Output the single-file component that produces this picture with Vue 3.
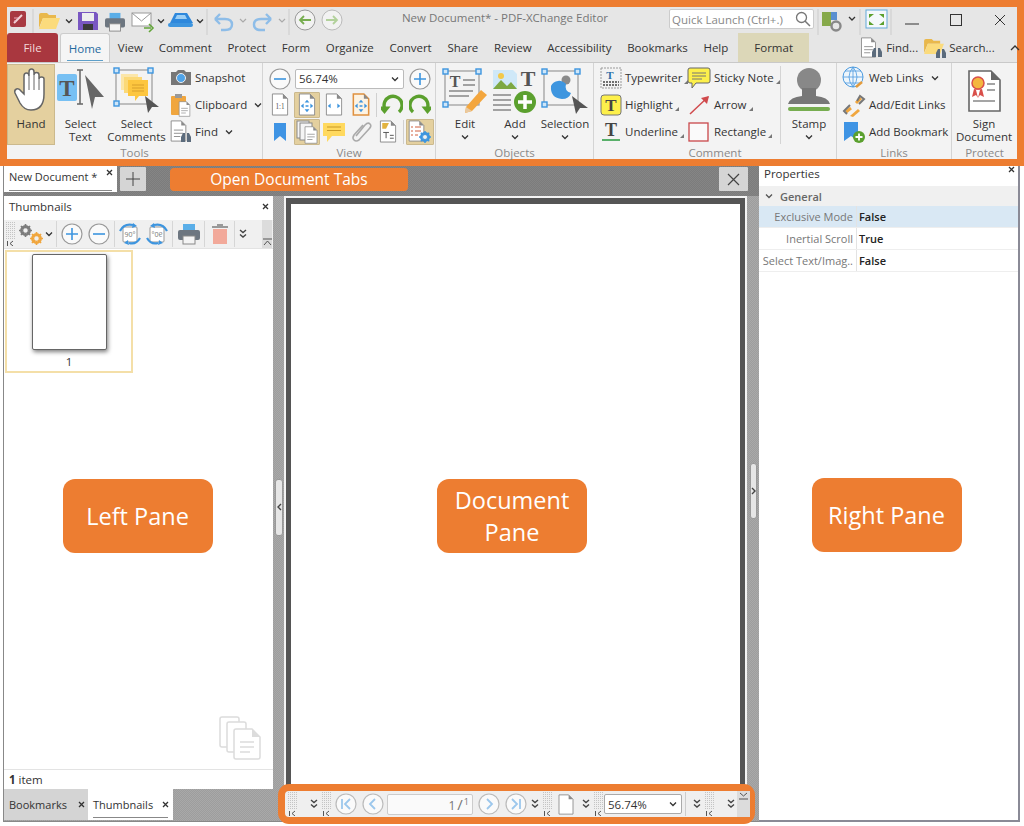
<script setup>
const tabs = ['View', 'Comment', 'Protect', 'Form', 'Organize', 'Convert', 'Share', 'Review', 'Accessibility', 'Bookmarks', 'Help']
const props = [
  { name: 'Exclusive Mode', value: 'False', on: true },
  { name: 'Inertial Scroll', value: 'True', on: false },
  { name: 'Select Text/Imag..', value: 'False', on: false }
]
</script>

<template>
  <div class="app">
    <svg class="defs" aria-hidden="true">
      <defs>
        <pattern id="dots" width="2" height="2" patternUnits="userSpaceOnUse"><rect width="1" height="1" fill="#c4c4c4" /></pattern>
        <symbol id="chev" viewBox="0 0 8 8"><path d="M1 2.500 4 5.500 7 2.500" fill="none" stroke="#333" stroke-width="1.300" /></symbol>
        <symbol id="dbl" viewBox="0 0 10 12"><path d="M2 2 5 4.500 8 2M2 6.500 5 9 8 6.500" fill="none" stroke="#444" stroke-width="1.400" /></symbol>
        <symbol id="grip" viewBox="0 0 10 24"><rect width="10" height="18" fill="url(#dots)" /><path d="M1.500 19v5M7 19 4 21.500 7 24" fill="none" stroke="#555" /></symbol>
        <symbol id="circ" viewBox="0 0 22 22"><circle cx="11" cy="11" r="10" fill="#fafafa" stroke="#bbb" stroke-width="1.200" /></symbol>
        <symbol id="plus" viewBox="0 0 22 22"><circle cx="11" cy="11" r="10" fill="#fafafa" stroke="#999" stroke-width="1.200" /><path d="M11 5v12M5 11h12" stroke="#3d95df" stroke-width="1.600" /></symbol>
        <symbol id="minus" viewBox="0 0 22 22"><circle cx="11" cy="11" r="10" fill="#fafafa" stroke="#999" stroke-width="1.200" /><path d="M5 11h12" stroke="#3d95df" stroke-width="1.600" /></symbol>
        <symbol id="print" viewBox="0 0 24 22"><rect x="6" y="1" width="12" height="7" fill="#5aaee8" /><rect x="1" y="7" width="22" height="10" rx="2" fill="#6d7680" /><rect x="6" y="13" width="12" height="8" fill="#f4f4f4" stroke="#888" /></symbol>
        <symbol id="folder" viewBox="0 0 23 18"><path d="M1 3q0-2 2-2h6l2 2h7v3H5L1 16z" fill="#e9b84c" /><path d="M1 17 5 6h17l-4 11z" fill="#fbdb7c" /></symbol>
        <symbol id="binoc" viewBox="0 0 12 11"><path d="M1 10V5l2-4h2v9zM7 10V1h2l2 4v5z" fill="#5b6b7c" /></symbol>
        <symbol id="doc" viewBox="0 0 18 24"><path d="M1 1h11l5 5v17H1z" fill="#fff" stroke="#8a8a8a" /><path d="M12 1v5h5z" fill="#8a8a8a" /></symbol>
        <symbol id="docl" viewBox="0 0 18 24"><path d="M1 1h11l5 5v17H1z" fill="#fff" stroke="#8a8a8a" /><path d="M12 1v5h5z" fill="#8a8a8a" /><path d="M4 11h10M4 14.500h10M4 18h7" stroke="#8a8a8a" /></symbol>
        <symbol id="arrows4" viewBox="0 0 18 24"><path d="M9 7 6.500 10h5zM9 20l-2.500-3h5zM2.500 13.500l3-2.500v5zM15.500 13.500l-3-2.500v5z" fill="#3d95df" /><path d="M7.500 13.500h3" stroke="#3d95df" stroke-width="1.500" /></symbol>
        <symbol id="rot" viewBox="0 0 22 22"><path d="M4 18A9 9 0 1 1 18.500 14" fill="none" stroke="#5ba02e" stroke-width="3.400" /><path d="M12.500 12.500h12L18.500 20z" fill="#5ba02e" /></symbol>
        <symbol id="ribbon" viewBox="0 0 14 20"><path d="M1 1h12v18l-6-5-6 5z" fill="#3f94e4" /></symbol>
        <symbol id="note" viewBox="0 0 24 22"><path d="M1 2h22v13H10l-5 6v-6H1z" fill="#ffd95e" /><path d="M5 6h14M5 9.500h14" stroke="#c99a27" /></symbol>
        <symbol id="rot90" viewBox="0 0 22 22"><rect x="4" y="4" width="14" height="15" rx="1" fill="#fff" stroke="#999" /><text x="11" y="14" font-size="7" text-anchor="middle" fill="#777" font-family="Open Sans">90°</text><path d="M1 8Q5 0 14 2M21 15q-4 7-11 5" fill="none" stroke="#3d95df" stroke-width="2.200" /><path d="M14 0l4 3-5 2zM9 17l-4 3 5 2z" fill="#3d95df" /></symbol>
        <symbol id="gear" viewBox="0 0 12 12"><circle cx="6" cy="6" r="3.800" fill="none" stroke="currentColor" stroke-width="2.400" /><path d="M6 0v12M0 6h12M1.800 1.800l8.400 8.400M10.200 1.800l-8.400 8.400" stroke="currentColor" stroke-width="1.500" /><circle cx="6" cy="6" r="2" fill="#f0f0f0" /></symbol>
      </defs>
    </svg>

    <header class="top">
      <div class="titlebar">
        <svg width="31" height="26" viewBox="0 0 31 26"><rect x="3" y="2" width="16" height="16" rx="2" fill="#a83a42" /><path d="M7 14 15 6" stroke="#f0d5d8" stroke-width="2" /><path d="M7 9h4M7 12h2" stroke="#eab" /><path d="M26 0v26" stroke="#ccc" /></svg>
        <svg width="23" height="26"><use href="#folder" x="0" y="3" width="23" height="18" /></svg>
        <svg width="16" height="26"><use href="#chev" x="4" y="8" width="8" height="8" /></svg>
        <svg width="27" height="26" viewBox="0 0 27 26"><path d="M1 3h18l2 2v16H1z" fill="#7957c2" /><rect x="5" y="4" width="12" height="8" fill="#eee" /><rect x="6" y="15" width="10" height="6" fill="#3a3a3a" /></svg>
        <svg width="27" height="26"><use href="#print" x="0" y="3" width="22" height="20" /></svg>
        <svg width="26" height="26" viewBox="0 0 26 26"><rect x="1" y="4" width="19" height="13" fill="#fff" stroke="#999" /><path d="M1 4 10.500 12 20 4" fill="none" stroke="#999" /><path d="M13 19h7M18 15l4 4-4 4" fill="none" stroke="#63a53a" stroke-width="1.600" /></svg>
        <svg width="8" height="26"><use href="#chev" x="0" y="8" width="8" height="8" /></svg>
        <svg width="31" height="26" viewBox="0 0 31 26"><path d="M5 14 10 4h12l6 10z" fill="#2e88dc" /><path d="M12 6h8l2 4H10z" fill="#9ccff5" /><rect x="3" y="14" width="25" height="4" rx="2" fill="#3d95df" /></svg>
        <svg width="8" height="26"><use href="#chev" x="0" y="8" width="8" height="8" /></svg>
        <svg width="75" height="26" viewBox="0 0 75 26"><path d="M3 0v26" stroke="#ccc" /><path d="M11 10h10q7 0 7 5.500T21 21h-4M11 10l5-5M11 10l5 5" fill="none" stroke="#8ebde8" stroke-width="2.400" /><path d="M36 10l3 3 3-3" fill="none" stroke="#aaa" stroke-width="1.200" /><path d="M67 10H57q-7 0-7 5.500T57 21h4M67 10l-5-5M67 10l-5 5" fill="none" stroke="#8ebde8" stroke-width="2.400" /></svg>
        <svg width="15" height="26"><path d="M0 10l3 3 3-3" fill="none" stroke="#aaa" stroke-width="1.200" /><path d="M10 0v26" stroke="#ccc" /></svg>
        <svg width="56" height="26" viewBox="0 0 56 26"><circle cx="11" cy="11" r="10" fill="#f2f2f2" stroke="#999" /><path d="M17 11H6M10 7l-4 4 4 4" fill="none" stroke="#77ad50" stroke-width="1.800" /><circle cx="38" cy="11" r="10" fill="#f2f2f2" stroke="#bbb" /><path d="M32 11h11M39 7l4 4-4 4" fill="none" stroke="#b2d19b" stroke-width="1.800" /></svg>
        <div class="title">New Document* - PDF-XChange Editor</div>
        <div class="quick"><span>Quick Launch (Ctrl+.)</span><svg width="16" height="16" viewBox="0 0 16 16"><circle cx="6.500" cy="6.500" r="5" fill="none" stroke="#777" stroke-width="1.300" /><path d="M10 10l5 5" stroke="#777" stroke-width="1.500" /></svg></div>
        <svg class="qr" width="46" height="26" viewBox="0 0 46 26"><path d="M2 0v26" stroke="#ccc" /><path d="M6 3h9v14H6z" fill="#86a94a" /><path d="M15 3h6v8h-6z" fill="#5a8fd0" /><circle cx="20" cy="17" r="4.500" fill="#e6e6e6" stroke="#888" stroke-width="2.400" /><path d="M33 8l3 3 3-3" fill="none" stroke="#333" stroke-width="1.300" /><path d="M44 0v26" stroke="#ccc" /></svg>
        <svg width="31" height="26" viewBox="0 0 31 26"><rect x="4" y="1" width="21" height="18" fill="#f4f8fb" stroke="#62a9d9" /><path d="M7 5h5l-5 4zM22 5h-5l5 4zM7 16h5l-5-4zM22 16h-5l5-4z" fill="#5ba02e" /><path d="M29 0v26" stroke="#ccc" /></svg>
        <div class="wins">
          <svg width="14" height="14"><path d="M0 11h14" stroke="#333" /></svg>
          <svg width="14" height="14"><rect x="1.500" y="1.500" width="11" height="11" fill="none" stroke="#333" /></svg>
          <svg width="14" height="14"><path d="M2 2l10 10M12 2 2 12" stroke="#333" /></svg>
        </div>
      </div>

      <nav class="tabrow">
        <div class="file">File</div>
        <div class="home"><span>Home</span></div>
        <div class="tab" v-for="t in tabs" :key="t">{{ t }}</div>
        <div class="format">Format</div>
        <div class="tabtools">
          <span class="tt"><svg width="24" height="22" viewBox="0 0 24 22"><use href="#docl" x="0" y="0" width="17" height="21" /><use href="#binoc" x="11" y="10" width="12" height="11" /></svg>Find...</span>
          <span class="tt"><svg width="24" height="22" viewBox="0 0 24 22"><use href="#folder" x="0" y="1" width="22" height="17" /><use href="#binoc" x="12" y="11" width="12" height="11" /></svg>Search...</span>
          <svg class="caret" width="10" height="8"><path d="M1 6l4-4 4 4" fill="none" stroke="#333" stroke-width="1.300" /></svg>
        </div>
      </nav>

      <div class="ribbon">
        <section class="group g-tools">
          <div class="gbody">
            <button class="big w48 act">
              <span class="ic"><svg width="36" height="46" viewBox="0 0 36 46"><path d="M11 26V8q0-3 2.500-3T16 8V4q0-3 2.500-3T21 4v3q0-2.500 2.500-2.500T26 7v4q0-2 2.500-2T31 11v15q0 16-13 16-7 0-11-7L2 25q-1-3 1.500-4t4.500 2z" fill="#fff" stroke="#666" stroke-width="1.500" /><path d="M16 8v14M21 7v15M26 11v11" stroke="#666" /></svg></span>
              <span>Hand</span>
            </button>
            <button class="big w47 ml2">
              <span class="ic"><svg width="47" height="42" viewBox="0 0 47 42"><rect x="0" y="4" width="20" height="27" rx="2" fill="#77c0f3" /><text x="10" y="26" font-size="23" font-weight="700" text-anchor="middle" fill="#555" font-family="Liberation Serif">T</text><path d="M23 0v34M20 0h6M20 34h6" stroke="#666" stroke-width="1.500" /><path d="M28 5 47 27H38L35 39z" fill="#666" /></svg></span>
              <span>Select<br />Text</span>
            </button>
            <button class="big w57 ml4">
              <span class="ic"><svg width="46" height="46" viewBox="0 0 46 46"><rect x="2" y="2" width="36" height="34" fill="none" stroke="#999" stroke-width="1.200" /><g fill="#cfe6f8" stroke="#3d95df" stroke-width="1.400"><rect x="0" y="0" width="5" height="5" /><rect x="34" y="0" width="5" height="5" /><rect x="0" y="33" width="5" height="5" /></g><path d="M7 6h17v16H7z" fill="#fbe6a9" /><path d="M10 9h18v16H10z" fill="#fbd978" /><path d="M14 12h20v16H25l-4 5v-5h-7z" fill="#fdc63f" /><path d="M18 17h12M18 20h12M18 23h12" stroke="#d89f2c" /><path d="M31 28 45 39H38L34 45z" fill="#555" /></svg></span>
              <span>Select<br />Comments</span>
            </button>
            <div class="rows tools-rows">
              <div class="row"><svg width="22" height="17" viewBox="0 0 22 17"><path d="M1 3h5l2-2h6l2 2h5v13H1z" fill="#777" /><circle cx="11" cy="9" r="4.500" fill="#4fa3e8" stroke="#eee" /></svg>Snapshot</div>
              <div class="row"><svg width="22" height="24" viewBox="0 0 22 24"><rect x="1" y="3" width="15" height="19" rx="1" fill="#f0a63e" /><rect x="5" y="1" width="7" height="4" fill="#999" /><use href="#docl" x="8" y="8" width="13" height="16" /></svg>Clipboard<svg class="down" width="8" height="8"><use href="#chev" width="8" height="8" /></svg></div>
              <div class="row"><svg width="22" height="24" viewBox="0 0 22 24"><use href="#docl" x="0" y="0" width="17" height="22" /><use href="#binoc" x="10" y="12" width="12" height="11" /></svg>Find<svg class="down" width="8" height="8"><use href="#chev" width="8" height="8" /></svg></div>
            </div>
          </div>
          <div class="glabel">Tools</div>
        </section>

        <section class="group g-view">
          <div class="gbody col">
            <div class="vrow r1">
              <svg width="22" height="22"><use href="#minus" width="22" height="22" /></svg>
              <div class="combo"><span>56.74%</span><svg width="8" height="8"><use href="#chev" width="8" height="8" /></svg></div>
              <svg width="22" height="22"><use href="#plus" width="22" height="22" /></svg>
            </div>
            <div class="vrow r2">
              <span class="vb"><svg width="18" height="23" viewBox="0 0 18 24"><use href="#doc" width="18" height="24" /><text x="9" y="17" font-size="7.500" text-anchor="middle" fill="#555" font-family="Liberation Serif">1:1</text></svg></span>
              <span class="vb act"><svg width="18" height="23" viewBox="0 0 18 24"><use href="#doc" width="18" height="24" /><use href="#arrows4" width="18" height="24" /></svg></span>
              <span class="vb"><svg width="18" height="23" viewBox="0 0 18 24"><use href="#doc" width="18" height="24" /><path d="M2.500 13.500l3-2.500v5zM15.500 13.500l-3-2.500v5z" fill="#3d95df" /></svg></span>
              <span class="vb"><svg width="18" height="23" viewBox="0 0 18 24"><path d="M1 1h11l5 5v17H1z" fill="#fdf3e3" stroke="#e0913f" stroke-width="1.600" /><path d="M12 1v5h5z" fill="#8a8a8a" /><use href="#arrows4" width="18" height="24" /></svg></span>
              <i class="vsep"></i>
              <svg class="rt1" width="22" height="22"><use href="#rot" transform="matrix(-1 0 0 1 22 0)" width="22" height="22" /></svg>
              <svg class="rt2" width="22" height="22"><use href="#rot" width="22" height="22" /></svg>
            </div>
            <div class="vrow r3">
              <span class="vb"><svg width="14" height="20"><use href="#ribbon" width="14" height="20" /></svg></span>
              <span class="vb act"><svg width="22" height="24" viewBox="0 0 22 24"><rect x="1" y="1" width="12" height="17" fill="#f5f5f5" stroke="#888" /><rect x="4" y="3" width="12" height="17" fill="#f5f5f5" stroke="#888" /><use href="#docl" x="8" y="6" width="14" height="18" /></svg></span>
              <span class="vb"><svg width="24" height="22"><use href="#note" width="24" height="22" /></svg></span>
              <span class="vb"><svg width="22" height="22" viewBox="0 0 22 22"><path d="M6 15 15 4q3-3 5-1t-1 5L9 19q-3 2-5 0t0-5L13 4" fill="none" stroke="#aaa" stroke-width="1.600" /></svg></span>
              <span class="vb"><svg width="18" height="23" viewBox="0 0 18 24"><use href="#doc" width="18" height="24" /><path d="M3 3h7l-3 6H3z" fill="#e2b340" /><path d="M4 13h6M7 13v6M11 16h4M11 19h4" stroke="#555" /></svg></span>
              <i class="vsep"></i>
              <span class="vb act last"><svg width="24" height="24" viewBox="0 0 24 24"><use href="#doc" width="17" height="22" /><path d="M3 7h2M7 7h6M3 11h2M7 11h6M3 15h2M7 15h3" stroke="#d0603f" /><use class="bgear" href="#gear" x="11" y="11" width="12" height="12" /></svg></span>
            </div>
          </div>
          <div class="glabel">View</div>
        </section>

        <section class="group g-obj">
          <div class="gbody objs">
            <button class="big w52">
              <span class="ic"><svg width="46" height="46" viewBox="0 0 46 46"><rect x="3" y="3" width="34" height="34" fill="none" stroke="#999" stroke-width="1.200" /><g fill="#cfe6f8" stroke="#3d95df" stroke-width="1.400"><rect x="1" y="1" width="5" height="5" /><rect x="34" y="1" width="5" height="5" /><rect x="1" y="34" width="5" height="5" /></g><text x="13" y="19" font-size="16" text-anchor="middle" fill="#555" font-family="Liberation Serif" font-weight="700">T</text><path d="M21 12h12M21 17h12M7 23h24M7 28h20" stroke="#888" stroke-width="1.300" /><path d="M24 39 39 22l6 5-15 16-7 2z" fill="#f3a63e" /><path d="M23 45l1-6 6 4z" fill="#e9c9a0" /></svg></span>
              <span>Edit</span><svg class="under" width="8" height="8"><use href="#chev" width="8" height="8" /></svg>
            </button>
            <button class="big w46">
              <span class="ic"><svg width="46" height="46" viewBox="0 0 46 46"><path d="M1 2h20l4 4v15H1z" fill="#cfe8f8" /><circle cx="9" cy="8" r="3" fill="#f3c94a" /><path d="M1 21 9 12l6 6 4-4 6 7z" fill="#7da843" /><text x="36" y="18" font-size="22" font-weight="700" text-anchor="middle" fill="#555" font-family="Liberation Serif">T</text><path d="M1 27h18M1 32h18M1 37h18M1 42h18" stroke="#888" stroke-width="1.300" /><circle cx="33" cy="34" r="11" fill="#5ba02e" /><path d="M33 27v14M26 34h14" stroke="#fff" stroke-width="3.500" /></svg></span>
              <span>Add</span><svg class="under" width="8" height="8"><use href="#chev" width="8" height="8" /></svg>
            </button>
            <button class="big w52">
              <span class="ic"><svg width="48" height="46" viewBox="0 0 48 46"><rect x="3" y="3" width="34" height="34" fill="none" stroke="#999" stroke-width="1.200" /><g fill="#cfe6f8" stroke="#3d95df" stroke-width="1.400"><rect x="1" y="1" width="5" height="5" /><rect x="34" y="1" width="5" height="5" /><rect x="1" y="34" width="5" height="5" /></g><circle cx="25" cy="12" r="4.500" fill="#8a8a8a" /><path d="M10 18a9 9 0 0 1 15-2q-2 7 5 9-2 6-9 6-12-1-11-13z" fill="#3d95df" /><path d="M31 28 47 40H39L35 46z" fill="#555" /></svg></span>
              <span>Selection</span><svg class="under" width="8" height="8"><use href="#chev" width="8" height="8" /></svg>
            </button>
          </div>
          <div class="glabel">Objects</div>
        </section>

        <section class="group g-comment">
          <div class="gbody">
            <div class="rows c1">
              <div class="row"><svg width="22" height="22" viewBox="0 0 22 22"><rect x="1" y="1" width="20" height="20" fill="#f2f2f2" stroke="#999" stroke-dasharray="2 1" /><text x="10" y="12" font-size="11" font-weight="700" text-anchor="middle" fill="#2f6fa8" font-family="Liberation Serif">T</text><path d="M3 15h16M3 18h16" stroke="#444" stroke-width="1.600" stroke-dasharray="2 1" /></svg>Typewriter<i class="cn"></i></div>
              <div class="row"><svg width="22" height="22" viewBox="0 0 22 22"><rect x="1" y="1" width="20" height="20" rx="3" fill="#fdf04b" stroke="#777" /><text x="11" y="17" font-size="17" font-weight="700" text-anchor="middle" fill="#444" font-family="Liberation Serif">T</text></svg>Highlight<i class="cn"></i></div>
              <div class="row"><svg width="22" height="22" viewBox="0 0 22 22"><text x="11" y="15" font-size="18" font-weight="700" text-anchor="middle" fill="#444" font-family="Liberation Serif">T</text><path d="M2 19h18" stroke="#59b06a" stroke-width="2" /></svg>Underline<i class="cn"></i></div>
            </div>
            <div class="rows c2">
              <div class="row"><svg width="24" height="22"><path d="M1 3q0-2 2-2h18q2 0 2 2v11q0 2-2 2H9l-4 5v-5H3q-2 0-2-2z" fill="#fdf04b" stroke="#666" /><path d="M5 6h14M5 9h14M5 12h10" stroke="#777" /></svg>Sticky Note<i class="cn"></i></div>
              <div class="row"><svg width="24" height="22"><path d="M3 20 21 3" stroke="#d0494c" stroke-width="1.500" /><path d="M22 2l-8 2 6 6z" fill="#d0494c" /></svg>Arrow<i class="cn"></i></div>
              <div class="row"><svg width="24" height="22"><rect x="2" y="2" width="19" height="18" fill="#fafafa" stroke="#c9484b" stroke-width="1.300" /></svg>Rectangle<i class="cn"></i></div>
            </div>
            <i class="csep"></i>
            <button class="big w56">
              <span class="ic"><svg width="46" height="46" viewBox="0 0 46 46"><circle cx="23" cy="12" r="12" fill="#888" /><path d="M16 20h14v8q12 1 14 8H2q2-7 14-8z" fill="#777" /><rect x="2" y="39" width="42" height="4" rx="2" fill="#77ad50" /></svg></span>
              <span>Stamp</span><svg class="under" width="8" height="8"><use href="#chev" width="8" height="8" /></svg>
            </button>
          </div>
          <div class="glabel">Comment</div>
        </section>

        <section class="group g-links">
          <div class="gbody">
            <div class="rows l1">
              <div class="row"><svg width="24" height="24" viewBox="0 0 24 24"><circle cx="11" cy="11" r="10" fill="#eef6fc" stroke="#4b9adf" /><path d="M1 11h20M11 1v20M3 5h16M3 17h16M11 1Q3 11 11 21M11 1Q19 11 11 21" fill="none" stroke="#4b9adf" stroke-width=".8" /><path d="M14 21l6-5" stroke="#e39b3c" stroke-width="2.500" /></svg>Web Links<svg class="down" width="8" height="8"><use href="#chev" width="8" height="8" /></svg></div>
              <div class="row"><svg width="24" height="24" viewBox="0 0 24 24"><path d="M9 15 4 19M14 10l5-5" stroke="#f0a63e" stroke-width="3" /><path d="M5 21 2 18 8 12M15 8l3-5 4 3-5 5" fill="none" stroke="#777" stroke-width="2" /><path d="M8 23l8-7 2 2-7 6z" fill="#f0a63e" /></svg>Add/Edit Links</div>
              <div class="row"><svg width="24" height="24" viewBox="0 0 24 24"><path d="M2 2h14v19l-7-5-7 5z" fill="#3f94e4" /><circle cx="17" cy="17" r="6" fill="#5ba02e" /><path d="M17 13.500v7M13.500 17h7" stroke="#fff" stroke-width="1.800" /></svg>Add Bookmark</div>
            </div>
          </div>
          <div class="glabel">Links</div>
        </section>

        <section class="group g-protect">
          <div class="gbody">
            <button class="big w65">
              <span class="ic"><svg width="34" height="42" viewBox="0 0 34 42"><path d="M2 1h22l9 9v31H2z" fill="#fff" stroke="#666" stroke-width="1.600" /><path d="M24 1v9h9z" fill="#666" /><path d="M7 19l-2 8 4-2 2 3 2-8z M15 19l2 8-4-2-2 3-2-8z" fill="#d94f4a" /><circle cx="11" cy="13" r="6" fill="#f4b63f" stroke="#d94f4a" stroke-width="1.500" /><path d="M20 14h8M20 20h8M6 31h22" stroke="#888" stroke-width="1.400" /></svg></span>
              <span>Sign<br />Document</span>
            </button>
          </div>
          <div class="glabel">Protect</div>
        </section>
      </div>
    </header>

    <main class="main">
      <div class="center">
        <div class="docbar">
          <div class="doctab"><span>New Document *</span><svg class="tabx" width="7" height="7"><path d="M1 1l5 5M6 1 1 6" stroke="#333" stroke-width="1.300" /></svg></div>
          <div class="newtab"><svg width="16" height="16"><path d="M8 1v14M1 8h14" stroke="#444" /></svg></div>
          <div class="hint">Open Document Tabs</div>
          <div class="closeall"><svg width="13" height="13"><path d="M1 1l11 11M12 1 1 12" stroke="#444" stroke-width="1.200" /></svg></div>
        </div>
        <div class="work">
          <aside class="left">
            <div class="lpane">
              <div class="phead">Thumbnails<svg width="7" height="7"><path d="M1 1l5 5M6 1 1 6" stroke="#333" stroke-width="1.300" /></svg></div>
              <div class="ltool">
                <svg width="14" height="24"><use href="#grip" x="2" width="10" height="24" /></svg>
                <svg class="gears" width="26" height="24" viewBox="0 0 26 24"><use class="ggray" href="#gear" x="1" y="2" width="13" height="13" /><use class="gorange" href="#gear" x="12" y="10" width="13" height="13" /></svg>
                <svg width="10" height="24"><use href="#chev" x="1" y="8" width="8" height="8" /></svg>
                <i class="tsep first"></i>
                <svg class="t-l" width="22" height="22"><use href="#plus" width="22" height="22" /></svg>
                <svg class="t-g" width="22" height="22"><use href="#minus" width="22" height="22" /></svg>
                <i class="tsep"></i>
                <svg class="t-l" width="22" height="22"><use href="#rot90" width="22" height="22" /></svg>
                <svg class="t-g" width="22" height="22"><use href="#rot90" transform="matrix(-1 0 0 1 22 0)" width="22" height="22" /></svg>
                <i class="tsep"></i>
                <svg class="t-l t-pr" width="24" height="22"><use href="#print" width="24" height="22" /></svg>
                <i class="tsep"></i>
                <svg class="t-t" width="18" height="22" viewBox="0 0 18 22"><path d="M1 3h16v2H1zM6 1h6v2H6z" fill="#999" /><path d="M2 6h14v15H2z" fill="#f2a99a" /></svg>
                <i class="tsep"></i>
                <svg class="t-d" width="10" height="12"><use href="#dbl" width="10" height="12" /></svg>
                <span class="lbar"><svg width="9" height="8"><path d="M0 1h9M1 7l3.500-4L8 7" fill="none" stroke="#555" /></svg></span>
              </div>
              <div class="thumbs">
                <div class="thumb"><div class="page"></div><div class="num">1</div></div>
                <svg class="wm" width="42" height="44" viewBox="0 0 42 44"><rect x="1" y="1" width="19" height="30" rx="2" fill="none" stroke="#dcdcdc" stroke-width="1.500" /><rect x="8" y="6" width="19" height="30" rx="2" fill="#fff" stroke="#dcdcdc" stroke-width="1.500" /><path d="M17 13h16l8 8v20q0 2-2 2H17q-2 0-2-2V15q0-2 2-2z" fill="#fff" stroke="#dcdcdc" stroke-width="1.500" /><path d="M33 13v8h8z" fill="#dcdcdc" /><path d="M21 26h14M21 31h14M21 36h10" stroke="#dcdcdc" stroke-width="1.500" /></svg>
              </div>
              <div class="count"><b>1</b> item</div>
            </div>
            <div class="ltabs">
              <div class="ltab off">Bookmarks<svg width="7" height="7"><path d="M1 1l5 5M6 1 1 6" stroke="#333" stroke-width="1.300" /></svg></div>
              <div class="ltab on"><span>Thumbnails</span><svg width="7" height="7"><path d="M1 1l5 5M6 1 1 6" stroke="#333" stroke-width="1.300" /></svg></div>
            </div>
            <div class="overlay pane-l"><div class="big-label">Left Pane</div></div>
          </aside>
          <div class="split"><span class="handle"><svg width="5" height="8"><path d="M4 1 1 4l3 3" fill="none" stroke="#444" stroke-width="1.400" /></svg></span></div>
          <div class="docpane">
            <div class="frame">
              <div class="sheet"><div class="big-label two">Document Pane</div></div>
            </div>
            <div class="navbar">
              <svg width="12" height="24"><use href="#grip" x="2" width="10" height="24" /></svg>
              <svg class="m11" width="10" height="12"><use href="#dbl" width="10" height="12" /></svg>
              <svg class="m3" width="10" height="24"><use href="#grip" width="10" height="24" /></svg>
              <svg class="m3" width="22" height="22" viewBox="0 0 22 22"><use href="#circ" width="22" height="22" /><path d="M7 6v10M15 6l-5 5 5 5" fill="none" stroke="#9cc7ec" stroke-width="1.800" /></svg>
              <svg class="m5" width="22" height="22" viewBox="0 0 22 22"><use href="#circ" width="22" height="22" /><path d="M13 6l-5 5 5 5" fill="none" stroke="#9cc7ec" stroke-width="1.800" /></svg>
              <div class="pageinp">1<em>/</em><small>1</small></div>
              <svg class="m5" width="22" height="22" viewBox="0 0 22 22"><use href="#circ" width="22" height="22" /><path d="M9 6l5 5-5 5" fill="none" stroke="#9cc7ec" stroke-width="1.800" /></svg>
              <svg class="m5" width="22" height="22" viewBox="0 0 22 22"><use href="#circ" width="22" height="22" /><path d="M15 6v10M7 6l5 5-5 5" fill="none" stroke="#9cc7ec" stroke-width="1.800" /></svg>
              <svg class="m3" width="10" height="12"><use href="#dbl" width="10" height="12" /></svg>
              <svg class="m3" width="10" height="24"><use href="#grip" width="10" height="24" /></svg>
              <svg class="m5" width="16" height="21"><use href="#doc" width="16" height="21" /></svg>
              <svg class="m7" width="10" height="12"><use href="#dbl" width="10" height="12" /></svg>
              <svg class="m3" width="10" height="24"><use href="#grip" width="10" height="24" /></svg>
              <div class="combo small"><span>56.74%</span><svg width="8" height="8"><use href="#chev" width="8" height="8" /></svg></div>
              <i class="nsep"></i>
              <svg class="m3" width="10" height="12"><use href="#dbl" width="10" height="12" /></svg>
              <svg class="m3" width="10" height="24"><use href="#grip" width="10" height="24" /></svg>
              <svg class="m11" width="10" height="12"><use href="#dbl" width="10" height="12" /></svg>
              <span class="nbar"><svg width="9" height="8"><path d="M1 1l3.500 3L8 1M0 7h9" fill="none" stroke="#555" /></svg></span>
            </div>
          </div>
          <div class="split r"><span class="handle"><svg width="5" height="8"><path d="M1 1l3 3-3 3" fill="none" stroke="#444" stroke-width="1.400" /></svg></span></div>
        </div>
      </div>

      <aside class="right">
        <div class="rhead">Properties<svg width="7" height="7"><path d="M1 1l5 5M6 1 1 6" stroke="#333" stroke-width="1.300" /></svg></div>
        <div class="general"><svg width="8" height="8"><path d="M1 2.500 4 5.500 7 2.500" fill="none" stroke="#555" stroke-width="1.300" /></svg>General</div>
        <div class="prop" v-for="p in props" :key="p.name" :class="{ on: p.on }">
          <span class="pn">{{ p.name }}</span><span class="pv">{{ p.value }}</span>
        </div>
        <div class="overlay pane-r"><div class="big-label">Right Pane</div></div>
      </aside>
    </main>
  </div>
</template>

<style>
html, body { margin: 0; background: #fff; }
</style>

<style scoped>
.app { width: 1024px; height: 826px; display: flex; flex-direction: column; overflow: hidden; background: #fff; font: 11.5px "Open Sans", "Liberation Sans", sans-serif; color: #333; }
.defs { position: absolute; width: 0; height: 0; }
svg { display: block; flex: none; overflow: visible; }
button { all: unset; box-sizing: border-box; }

.top { height: 166px; box-sizing: border-box; border: 7px solid #ed7d31; background: #e6e6e6; display: flex; flex-direction: column; flex: none; }
.titlebar { height: 26px; display: flex; align-items: flex-start; padding-top: 2px; margin-bottom: -2px; flex: none; }
.title { width: 328px; margin-left: -9px; text-align: center; color: #777; line-height: 18px; flex: none; white-space: nowrap; }
.quick { width: 145px; height: 20px; box-sizing: border-box; border: 1px solid #ccc; border-radius: 2px; background: #fff; display: flex; align-items: center; justify-content: space-between; padding: 0 2px; color: #888; flex: none; white-space: nowrap; }
.qr { margin-left: 2px; }
.wins { display: flex; gap: 30px; align-items: center; height: 22px; margin-left: 12px; flex: none; }

.tabrow { height: 29px; display: flex; align-items: stretch; flex: none; position: relative; }
.file { width: 51px; background: #a9373f; color: #f3dada; border-radius: 3px 3px 0 0; display: flex; align-items: center; justify-content: center; flex: none; }
.home { width: 50px; margin-left: 2px; background: #f5f5f5; border: 1px solid #ccc; border-bottom: 0; border-radius: 3px 3px 0 0; box-sizing: border-box; color: #1f6a9e; display: flex; align-items: center; justify-content: center; position: relative; flex: none; }
.home::after { content: ""; position: absolute; left: 6px; right: 6px; bottom: 1px; height: 1px; background: #5d9fc9; }
.tab { padding: 0 7.850px; display: flex; align-items: center; white-space: nowrap; color: #333; flex: none; }
.format { width: 71px; margin-left: 2px; background: #dcd7b8; display: flex; align-items: center; justify-content: center; flex: none; }
.tabtools { display: flex; align-items: center; margin-left: 51px; flex: none; }
.tt { display: flex; align-items: center; gap: 2px; margin-right: 5px; white-space: nowrap; flex: none; }
.caret { margin-left: 10px; }

.ribbon { height: 97px; flex: none; box-sizing: border-box; display: flex; background: #f3f3f3; border-top: 1px solid #c9c9c9; }
.group { box-sizing: border-box; border-right: 1px solid #d4d4d4; display: flex; flex-direction: column; flex: none; }
.g-tools { width: 256px; } .g-view { width: 173px; } .g-obj { width: 158px; } .g-comment { width: 243px; } .g-links { width: 115px; } .g-protect { width: 65px; border-right: 0; }
.gbody { height: 83px; padding-top: 1px; box-sizing: border-box; display: flex; }
.gbody.col { flex-direction: column; }
.glabel { height: 13px; line-height: 13px; text-align: center; color: #8a8a8a; }
.big { height: 81px; display: flex; flex-direction: column; align-items: center; text-align: center; line-height: 13px; flex: none; color: #333; border: 1px solid transparent; }
.ic { height: 52px; display: flex; align-items: center; justify-content: center; flex: none; }
.big.act { background: #e4d09f; border-color: #cbb98d; }
.under { margin-top: 3px; }
.w48 { width: 48px; } .w47 { width: 47px; } .w57 { width: 57px; } .w52 { width: 52px; } .w46 { width: 46px; } .w56 { width: 56px; } .w65 { width: 64px; }
.ml2 { margin-left: 2px; } .ml4 { margin-left: 4px; }
.objs { padding-left: 3px; gap: 1px; }
.rows { display: flex; flex-direction: column; flex: none; }
.row { height: 27px; display: flex; align-items: center; gap: 3px; white-space: nowrap; position: relative; }
.down { margin-left: 4px; }
.tools-rows { margin-left: 5px; }
.c1 { margin-left: 6px; width: 87px; }
.c2 { width: 93px; }
.cn { width: 0; height: 0; border: 2px solid transparent; border-right-color: #777; border-bottom-color: #777; align-self: flex-end; margin: 0 0 7px -1px; }
.csep { width: 1px; height: 78px; margin-top: 2px; background: #d4d4d4; flex: none; }
.l1 { margin-left: 5px; }

.vrow { display: flex; align-items: center; flex: none; padding-left: 4px; }
.r1 { height: 27px; padding: 2px 0 0 6px; box-sizing: border-box; }
.combo { width: 109px; height: 20px; margin: 0 5px 0 4px; box-sizing: border-box; border: 1px solid #bbb; border-radius: 2px; background: #fff; padding: 0 4px 0 3px; display: flex; align-items: center; justify-content: space-between; flex: none; }
.combo.small { width: 78px; border-color: #aaa; margin: 0; }
.r2, .r3 { height: 27px; }
.vb { width: 26px; height: 26px; margin-right: 1px; box-sizing: border-box; display: flex; align-items: center; justify-content: center; border: 1px solid transparent; border-radius: 1px; flex: none; }
.vb.act { background: #e4d09f; border-color: #cbb98d; }
.vb.last { width: 28px; }
.vsep { width: 1px; height: 24px; margin: 0 2px 0 1px; background: #d0d0d0; flex: none; }
.rt1 { margin-left: 2px; }
.rt2 { margin-left: 6px; }
.bgear { color: #3d95df; }

.main { flex: 1; min-height: 0; display: flex; background: #fff; padding: 0 4px 4px 3px; }
.center { width: 756px; flex: none; display: flex; flex-direction: column; box-sizing: border-box; border-left: 1px solid #888; border-bottom: 1px solid #888; background: #a3a3a3 repeating-conic-gradient(#9d9d9d 0 25%, #a9a9a9 0 50%) 0 0 / 2px 2px; }
.docbar { height: 30px; display: flex; align-items: flex-start; flex: none; background: #808080 repeating-conic-gradient(#7c7c7c 0 25%, #858585 0 50%) 0 0 / 2px 2px; }
.doctab { width: 113px; height: 26px; box-sizing: border-box; background: #fff; padding: 4px 5px 0; position: relative; flex: none; color: #333; line-height: 14px; font-size: 11px; }
.doctab::after { content: ""; position: absolute; left: 5px; right: 5px; bottom: 1px; height: 1px; background: #888; }
.tabx { position: absolute; right: 4px; top: 3px; }
.newtab { width: 26px; height: 24px; margin: 1px 0 0 3px; background: #d5d5d5; display: flex; align-items: center; justify-content: center; flex: none; border-radius: 1px; }
.hint { width: 238px; height: 23px; margin: 2px 0 0 24px; background: #ed7d31; color: #fff; border-radius: 4px; font-size: 15.500px; text-align: center; line-height: 23px; flex: none; }
.closeall { width: 29px; height: 24px; margin: 1px 0 0 311px; background: #d5d5d5; display: flex; align-items: center; justify-content: center; flex: none; border-radius: 1px; }
.work { flex: 1; min-height: 0; display: flex; }
.left { width: 269px; flex: none; display: flex; flex-direction: column; position: relative; padding-bottom: 1px; box-sizing: border-box; }
.lpane { flex: 1; min-height: 0; background: #fff; display: flex; flex-direction: column; }
.phead { height: 24px; display: flex; align-items: center; justify-content: space-between; padding: 0 4px 4px 5px; box-sizing: border-box; flex: none; color: #333; }
.ltool { height: 29px; background: #f0f0f0; display: flex; align-items: center; flex: none; border-bottom: 1px solid #e3e3e3; box-sizing: border-box; }
.gears { color: #7c7c7c; }
.ggray { color: #7c7c7c; }
.gorange { color: #f0a63e; }
.tsep { width: 1px; height: 26px; background: #d6d6d6; flex: none; margin-left: 1px; }
.tsep.first { margin-left: 2px; }
.t-l { margin-left: 4px; } .t-g { margin-left: 5px; margin-right: 3px; }
.t-pr { margin-right: 2px; }
.t-t { margin-left: 6px; margin-right: 4px; }
.t-d { margin-left: 3px; }
.lbar { width: 10px; height: 28px; margin-left: 14px; background: #dcdcdc; display: flex; align-items: flex-end; justify-content: center; padding-bottom: 2px; box-sizing: border-box; }
.thumbs { flex: 1; min-height: 0; position: relative; border-bottom: 1px solid #e3e3e3; }
.thumb { width: 128px; height: 123px; margin: 1px 0 0 1px; box-sizing: border-box; border: 2px solid #f4dfa8; display: flex; flex-direction: column; align-items: center; padding-top: 2px; }
.page { width: 75px; height: 96px; box-sizing: border-box; background: #fff; border: 1px solid #666; border-radius: 2px; box-shadow: 1px 2px 4px rgba(0, 0, 0, .5); flex: none; }
.num { margin-top: 5px; line-height: 14px; }
.wm { position: absolute; right: 12px; bottom: 9px; }
.count { height: 19px; padding-left: 5px; line-height: 19px; flex: none; }
.ltabs { height: 31px; display: flex; flex: none; }
.ltab { height: 31px; box-sizing: border-box; display: flex; align-items: center; justify-content: space-between; padding: 0 3px 0 5px; flex: none; font-size: 11px; }
.ltab.off { width: 84px; background: #d4d4d4; }
.ltab.on { width: 85px; background: #fff; position: relative; padding: 0 4px 0 5px; }
.ltab.on::after { content: ""; position: absolute; left: 5px; right: 5px; bottom: 2px; height: 1px; background: #888; }
.overlay { position: absolute; left: 0; right: 0; top: 0; bottom: 0; display: flex; align-items: center; justify-content: center; pointer-events: none; box-sizing: border-box; }
.pane-l { padding: 14px 2px 0 0; }
.pane-r { padding: 44px 4px 0 0; }
.big-label { width: 150px; box-sizing: border-box; padding: 0 6px; height: 74px; background: #ed7d31; border-radius: 12px; color: #fff; font-size: 23.500px; line-height: 32px; display: flex; align-items: center; justify-content: center; text-align: center; flex: none; }
.split { width: 11px; flex: none; display: flex; align-items: center; padding: 0 0 3px 2px; box-sizing: border-box; }
.handle { width: 8px; height: 57px; background: #e6e6e6; border: 1px solid #999; border-radius: 3px; box-sizing: border-box; display: flex; align-items: center; justify-content: center; flex: none; }
.split.r { width: 12px; padding: 0 0 36px 3px; }
.split.r .handle { width: 7px; height: 56px; }
.docpane { width: 463px; flex: none; display: flex; flex-direction: column; min-width: 0; }
.frame { flex: 1; min-height: 0; background: #555; padding: 6px 5px 0; box-sizing: border-box; margin: 0 0 -8px; border: 2px solid #f4f4f4; border-bottom: 0; }
.sheet { height: 100%; background: #fff; display: flex; align-items: center; justify-content: center; box-sizing: border-box; padding: 35px 7px 0 0; }
.navbar { height: 40px; margin: 0 -8px -3px -6px; box-sizing: border-box; border: 7px solid #ed7d31; border-radius: 11px; background: #efefef; display: flex; align-items: center; flex: none; position: relative; padding-left: 1px; }
.m3 { margin-left: 3px; } .m5 { margin-left: 5px; } .m7 { margin-left: 7px; } .m11 { margin-left: 11px; }
.pageinp { width: 86px; height: 21px; margin-left: 3px; box-sizing: border-box; border: 1px solid #ccc; border-radius: 2px; background: #fafafa; text-align: right; padding-right: 3px; line-height: 19px; color: #777; font-size: 12px; flex: none; }
.pageinp em { font-style: normal; font-size: 15px; margin: 0 1px 0 2px; }
.pageinp small { font-size: 9px; vertical-align: super; line-height: 0; }
.nsep { width: 1px; height: 24px; margin: 0 3px; background: #ccc; flex: none; }
.nbar { width: 13px; height: 26px; margin-left: 1px; background: #dcdcdc; display: flex; justify-content: center; padding-top: 1px; box-sizing: border-box; flex: none; }
.right { flex: 1; min-width: 0; background: #fff; border-right: 2px solid #8a8a96; border-bottom: 2px solid #8a8a96; display: flex; flex-direction: column; position: relative; }
.rhead { height: 20px; display: flex; justify-content: space-between; padding: 0 3px 0 5px; line-height: 16px; flex: none; }
.general { height: 20px; background: #f0f0f0; display: flex; align-items: center; gap: 7px; padding-left: 6px; color: #666; font-weight: 600; font-size: 11px; flex: none; }
.prop { height: 22px; display: grid; grid-template-columns: 98px 1fr; align-items: center; border-bottom: 1px solid #eee; box-sizing: border-box; flex: none; font-size: 11px; }
.prop.on { background: #d9e8f4; }
.pn { text-align: right; color: #777; padding-right: 3px; white-space: nowrap; height: 100%; line-height: 21px; border-right: 1px solid #e3e3e3; box-sizing: border-box; }
.pv { padding-left: 2px; color: #222; font-weight: 600; }
</style>
